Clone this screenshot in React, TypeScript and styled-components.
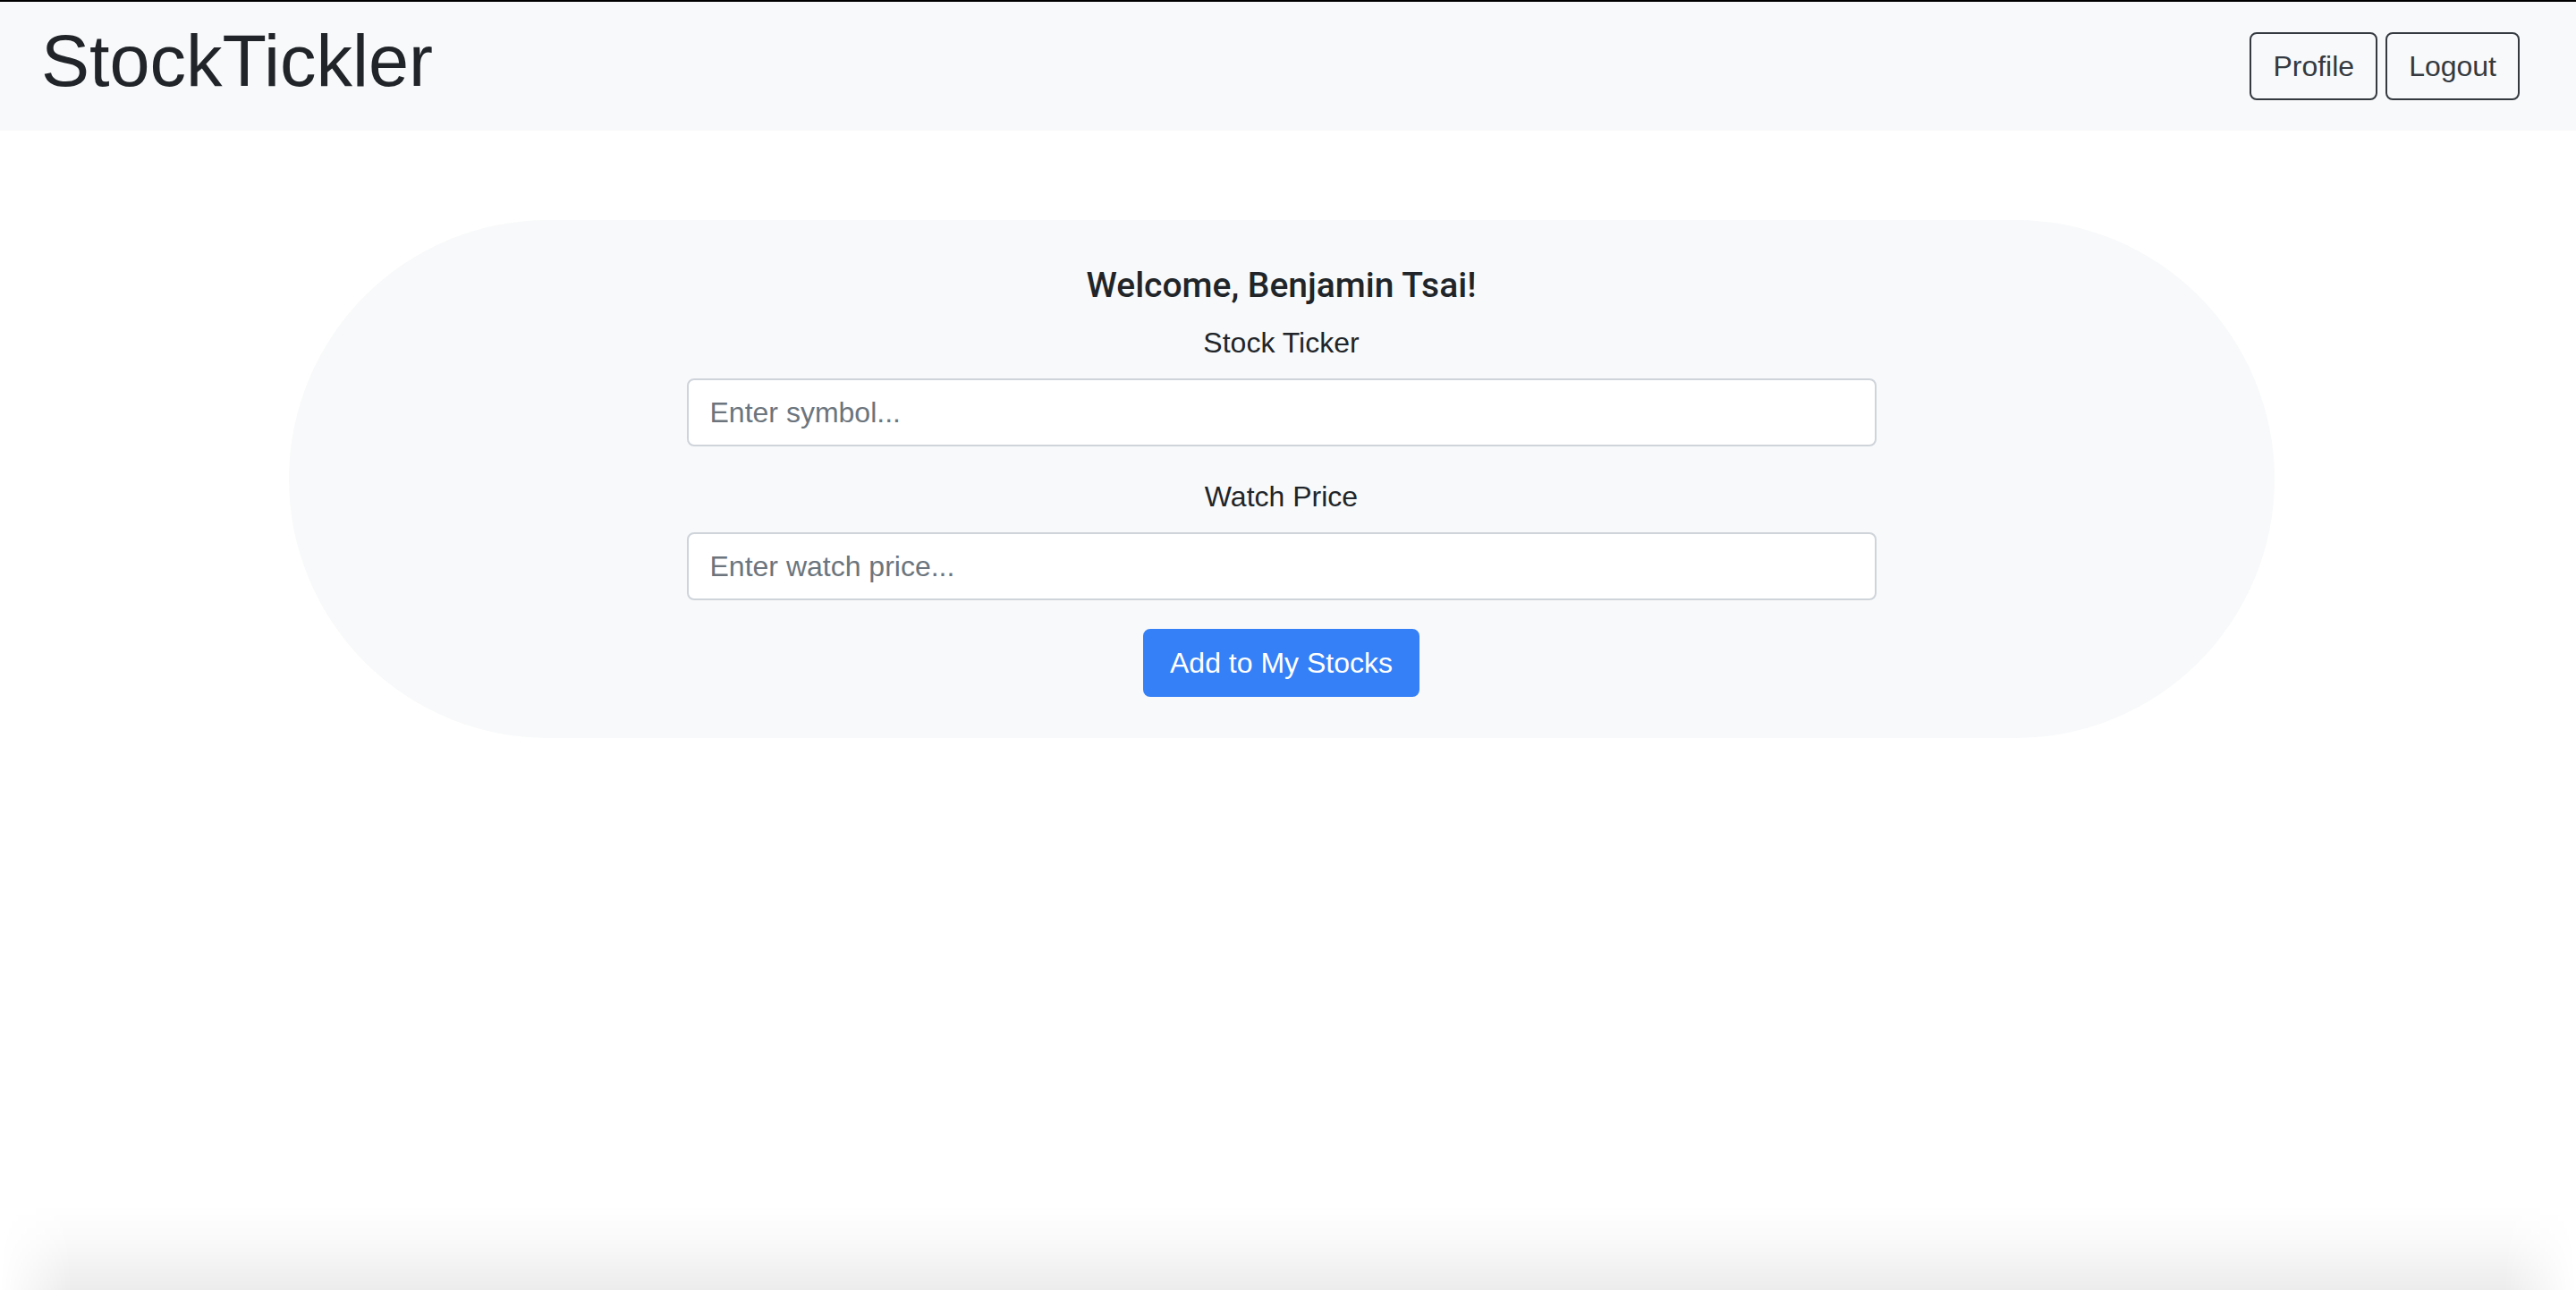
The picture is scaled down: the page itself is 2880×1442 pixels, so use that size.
import React from "react";
import styled, { createGlobalStyle } from "styled-components";

const GlobalStyle = createGlobalStyle`
  html, body {
    margin: 0;
    padding: 0;
    background: #ffffff;
  }
  body {
    font-family: "Liberation Sans", Arial, sans-serif;
    color: #212529;
    min-height: 1442px;
  }
  * { box-sizing: border-box; }
`;

const Page = styled.div`
  min-height: 1442px;
  display: flex;
  flex-direction: column;
`;

const Navbar = styled.header`
  height: 146px;
  border-top: 2px solid #000000;
  background: #f8f9fa;
  display: flex;
  align-items: center;
  justify-content: space-between;
  padding: 0 63px 0 46px;
`;

const Brand = styled.h1`
  margin: 0 0 12px 0;
  font-family: "Liberation Sans", Arial, sans-serif;
  font-size: 81px;
  line-height: 96px;
  font-weight: 400;
  color: #212529;
`;

const NavActions = styled.nav`
  display: flex;
  align-items: center;
  gap: 9px;
`;

const OutlineButton = styled.button`
  height: 76px;
  padding: 12px 24px;
  font-family: "Liberation Sans", Arial, sans-serif;
  font-size: 32px;
  line-height: 48px;
  color: #343a40;
  background: transparent;
  border: 2px solid #343a40;
  border-radius: 8px;
  cursor: pointer;
`;

const Main = styled.main`
  display: flex;
  justify-content: center;
  padding: 100px 15px 0 0;
`;

const Pill = styled.section`
  width: 2220px;
  height: 579px;
  background: #f8f9fa;
  border-radius: 9999px;
  padding: 49px 0 46px;
  display: flex;
  flex-direction: column;
  align-items: center;
`;

const Welcome = styled.h5`
  margin: 0 0 16px;
  font-family: Roboto, "Liberation Sans", Arial, sans-serif;
  font-size: 39px;
  line-height: 48px;
  font-weight: 500;
  color: #212529;
`;

const Form = styled.form`
  width: 1330px;
  display: flex;
  flex-direction: column;
  align-items: center;
`;

const Field = styled.div`
  width: 100%;
  display: flex;
  flex-direction: column;
  align-items: center;
  margin-bottom: 32px;
`;

const Label = styled.label`
  display: block;
  margin-bottom: 16px;
  font-size: 32px;
  line-height: 48px;
  color: #212529;
  text-align: center;
`;

const Input = styled.input`
  width: 100%;
  height: 76px;
  padding: 12px 24px;
  font-family: "Liberation Sans", Arial, sans-serif;
  font-size: 32px;
  line-height: 48px;
  color: #212529;
  background: #ffffff;
  border: 2px solid #ced4da;
  border-radius: 8px;
  outline: none;
  &::placeholder {
    color: #6c757d;
    opacity: 1;
  }
`;

const PrimaryButton = styled.button`
  height: 76px;
  padding: 12px 28px;
  font-family: "Liberation Sans", Arial, sans-serif;
  font-size: 32px;
  line-height: 48px;
  color: #ffffff;
  background: #3580f6;
  border: 2px solid #3580f6;
  border-radius: 8px;
  cursor: pointer;
`;

const WindowShadow = styled.div`
  position: fixed;
  left: 0;
  right: 0;
  bottom: 0;
  height: 96px;
  pointer-events: none;
  background: linear-gradient(to bottom, rgba(0, 0, 0, 0) 0%, rgba(0, 0, 0, 0.02) 40%, rgba(0, 0, 0, 0.075) 100%);
  -webkit-mask-image: linear-gradient(to right, transparent 0px, #000 80px, #000 calc(100% - 80px), transparent 100%);
  mask-image: linear-gradient(to right, transparent 0px, #000 80px, #000 calc(100% - 80px), transparent 100%);
`;

export default function App() {
  return (
    <Page>
      <GlobalStyle />
      <Navbar>
        <Brand>StockTickler</Brand>
        <NavActions>
          <OutlineButton type="button">Profile</OutlineButton>
          <OutlineButton type="button">Logout</OutlineButton>
        </NavActions>
      </Navbar>
      <Main>
        <Pill>
          <Welcome>Welcome, Benjamin Tsai!</Welcome>
          <Form onSubmit={(e) => e.preventDefault()}>
            <Field>
              <Label htmlFor="ticker">Stock Ticker</Label>
              <Input id="ticker" type="text" placeholder="Enter symbol..." />
            </Field>
            <Field>
              <Label htmlFor="watch">Watch Price</Label>
              <Input id="watch" type="text" placeholder="Enter watch price..." />
            </Field>
            <PrimaryButton type="submit">Add to My Stocks</PrimaryButton>
          </Form>
        </Pill>
      </Main>
      <WindowShadow />
    </Page>
  );
}
